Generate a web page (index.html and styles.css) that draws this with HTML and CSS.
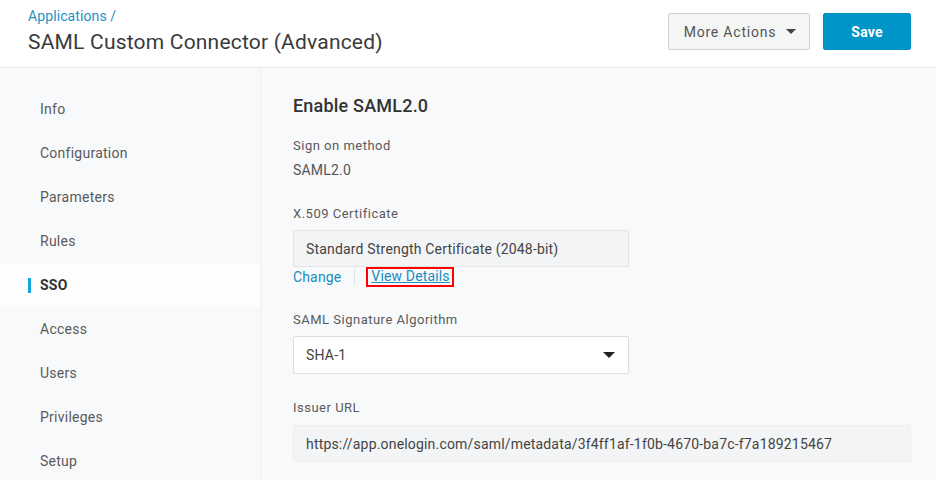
FILE: index.html
```html
<!DOCTYPE html>
<html>
<head>
<meta charset="utf-8">
<link rel="stylesheet" href="styles.css">
</head>
<body>
<header class="header">
  <div class="titles">
    <a class="crumb">Applications /</a>
    <h1 class="title">SAML Custom Connector (Advanced)</h1>
  </div>
  <div class="actions">
    <button class="btn btn-more">More Actions <span class="caret"></span></button>
    <button class="btn btn-save">Save</button>
  </div>
</header>
<div class="main">
  <nav class="sidebar">
    <div class="nav-item">Info</div>
    <div class="nav-item">Configuration</div>
    <div class="nav-item">Parameters</div>
    <div class="nav-item">Rules</div>
    <div class="nav-item active">SSO</div>
    <div class="nav-item">Access</div>
    <div class="nav-item">Users</div>
    <div class="nav-item">Privileges</div>
    <div class="nav-item">Setup</div>
  </nav>
  <section class="content">
    <h2 class="section-title">Enable SAML2.0</h2>
    <div class="label">Sign on method</div>
    <div class="value">SAML2.0</div>
    <div class="label label-cert">X.509 Certificate</div>
    <div class="box box-cert">Standard Strength Certificate (2048-bit)</div>
    <div class="links">
      <a class="link link-change">Change</a>
      <span class="sep"></span>
      <a class="link link-details">View Details</a>
    </div>
    <div class="label label-alg">SAML Signature Algorithm</div>
    <div class="select">SHA-1<span class="caret caret-dark"></span></div>
    <div class="label label-issuer">Issuer URL</div>
    <div class="box box-url">https://app.onelogin.com/saml/metadata/3f4ff1af-1f0b-4670-ba7c-f7a189215467</div>
  </section>
</div>
</body>
</html>
```
FILE: styles.css
```css
* { box-sizing: border-box; }
html, body { margin: 0; padding: 0; }
body {
  font-family: Roboto, "Liberation Sans", sans-serif;
  background: #f8f9fb;
  color: #555;
  width: 936px;
  height: 480px;
  overflow: hidden;
}
.header {
  height: 68px;
  background: #fff;
  border-bottom: 1px solid #e6e7e9;
  display: flex;
  justify-content: space-between;
  padding: 0 25px 0 28px;
}
.titles { padding-top: 7px; }
.crumb {
  display: block;
  color: #1f93c1;
  font-size: 14px;
  line-height: 18px;
  letter-spacing: 0.1px;
}
.title {
  margin: 4px 0 0;
  font-size: 21px;
  font-weight: 400;
  color: #3a3a3a;
  line-height: 26px;
  letter-spacing: 0.2px;
}
.actions {
  display: flex;
  gap: 13px;
  padding-top: 13px;
}
.btn {
  height: 37px;
  font-family: Roboto, "Liberation Sans", sans-serif;
  font-size: 14px;
  border-radius: 2px;
}
.btn-more {
  width: 142px;
  background: #f4f5f5;
  border: 1px solid #cfd1d2;
  color: #555;
  letter-spacing: 0.8px;
  display: flex;
  align-items: center;
  justify-content: center;
  gap: 10px;
  padding: 0 0 0 2px;
}
.caret {
  display: inline-block;
  width: 0; height: 0;
  border-left: 5px solid transparent;
  border-right: 5px solid transparent;
  border-top: 5px solid #444;
}
.btn-save {
  width: 88px;
  background: #0095c8;
  border: 1px solid #0090c2;
  color: #fff;
  font-weight: 700;
  letter-spacing: 0.2px;
}
.main { display: flex; height: 412px; }
.sidebar {
  width: 261px;
  border-right: 1px solid #eceef0;
  padding-top: 19px;
  flex-shrink: 0;
}
.nav-item {
  height: 44px;
  display: flex;
  align-items: center;
  padding-left: 40px;
  font-size: 14px;
  color: #5a5a5a;
  position: relative;
  letter-spacing: 0.25px;
}
.nav-item.active {
  background: #fdfdfe;
  font-weight: 700;
  color: #333;
}
.nav-item.active::before {
  content: "";
  position: absolute;
  left: 28px;
  top: 15px;
  width: 3px;
  height: 15px;
  background: #12a6dc;
}
.content {
  padding: 27px 25px 0 32px;
  flex: 1;
}
.section-title {
  margin: 0;
  font-size: 18px;
  font-weight: 500;
  color: #333;
  line-height: 22px;
  letter-spacing: 0.2px;
}
.label {
  font-size: 13px;
  color: #5a5a5a;
  line-height: 16px;
  margin-top: 21px;
  letter-spacing: 0.5px;
}
.value {
  margin-top: 8px;
  font-size: 14px;
  color: #555;
  line-height: 16px;
  letter-spacing: 0.2px;
}
.label-cert { margin-top: 28px; }
.box {
  background: #f3f4f5;
  border: 1px solid #e3e4e6;
  height: 37px;
  font-size: 14px;
  color: #444;
  display: flex;
  align-items: center;
  padding-left: 12px;
  border-radius: 2px;
}
.box-cert { width: 336px; margin-top: 8px; letter-spacing: 0.18px; }
.links {
  display: flex;
  align-items: center;
  height: 20px;
  margin-top: 0;
  font-size: 14px;
  letter-spacing: 0.15px;
}
.link { color: #1a8dc0; }
.link-change { margin-right: 13px; }
.sep { width: 1px; height: 18px; background: #e2e3e5; }
.link-details {
  margin-left: 11px;
  border: 2px solid #f00;
  padding: 0 2px 0 3px;
  text-decoration: underline;
  line-height: 15px;
  height: 20px;
}
.label-alg { margin-top: 25px; }
.select {
  width: 336px;
  height: 38px;
  margin-top: 8px;
  background: #fff;
  border: 1px solid #dcdee0;
  border-radius: 2px;
  display: flex;
  align-items: center;
  justify-content: space-between;
  padding: 0 13px 0 12px;
  font-size: 14px;
  color: #444;
  letter-spacing: 0.2px;
}
.caret-dark { border-top-color: #222; border-left-width: 6px; border-right-width: 6px; border-top-width: 6px; }
.label-issuer { margin-top: 26px; }
.box-url { margin-top: 9px; width: 618px; border-color: #eeeff1; letter-spacing: 0.18px; }
```
